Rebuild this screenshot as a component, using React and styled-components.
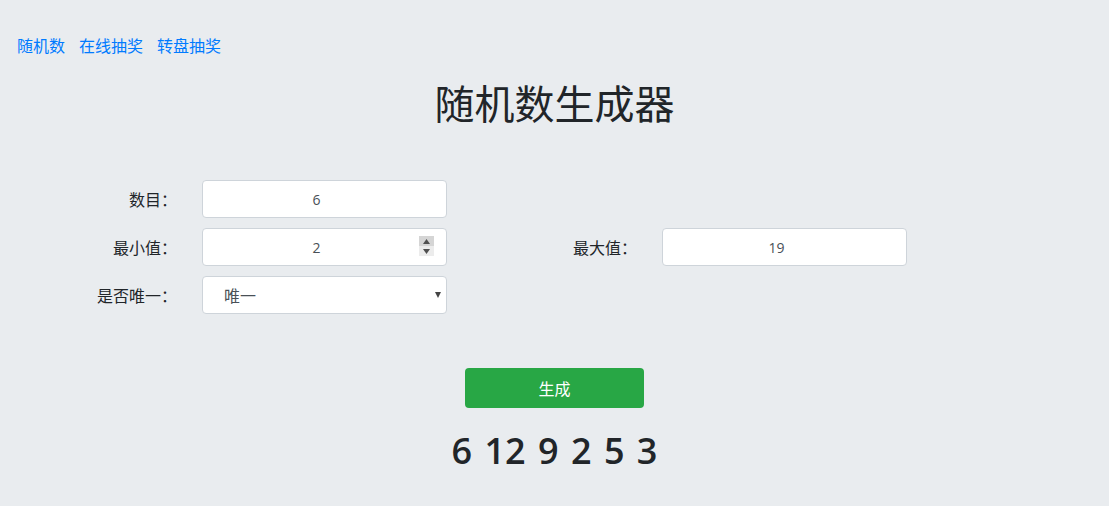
import React from 'react';
import styled, { createGlobalStyle } from 'styled-components';

const GlobalStyle = createGlobalStyle`
  html, body {
    margin: 0;
    padding: 0;
    background: #e9ecef;
  }
  body {
    font-family: "Open Sans", "Noto Sans CJK SC", sans-serif;
    color: #212529;
  }
`;

const Page = styled.div`
  min-height: 506px;
  padding-top: 34px;
  box-sizing: border-box;
`;

const Nav = styled.nav`
  display: flex;
  gap: 14px;
  padding-left: 17px;
  height: 24px;
  align-items: center;
`;

const NavLink = styled.a`
  color: #007bff;
  font-size: 16px;
  line-height: 24px;
  text-decoration: none;
`;

const Title = styled.h1`
  margin: 22px 0 0;
  text-align: center;
  font-size: 40px;
  line-height: 48px;
  font-weight: 400;
`;

const Form = styled.div`
  display: grid;
  grid-template-columns: 186px 275px 185px 275px;
  row-gap: 10px;
  margin-top: 52px;
`;

const Label = styled.label`
  grid-column: ${p => p.col};
  display: flex;
  align-items: center;
  justify-content: flex-end;
  padding-right: 9px;
  font-size: 16px;
`;

const Field = styled.div`
  grid-column: ${p => p.col};
  position: relative;
  padding: 0 14px 0 16px;
`;

const Input = styled.input`
  display: block;
  width: 100%;
  box-sizing: border-box;
  height: 38px;
  padding: 0 16px 0 0;
  border: 1px solid #ced4da;
  border-radius: 4px;
  background: #fff;
  text-align: center;
  font-family: "Open Sans", "Noto Sans CJK SC", sans-serif;
  font-size: 14px;
  color: #495057;
  outline: none;
`;

const Spinner = styled.div`
  position: absolute;
  top: 8px;
  right: 27px;
  width: 15px;
  height: 20px;
  display: flex;
  flex-direction: column;
`;

const SpinHalf = styled.div`
  flex: 1;
  display: flex;
  align-items: center;
  justify-content: center;
  background: ${p => (p.up ? '#d5d5d5' : '#ececec')};
`;

const Select = styled.div`
  position: relative;
  height: 38px;
  box-sizing: border-box;
  border: 1px solid #ced4da;
  border-radius: 4px;
  background: #fff;
  display: flex;
  align-items: center;
  padding-left: 21px;
  font-size: 16px;
  color: #495057;
`;

const Caret = styled.span`
  position: absolute;
  right: 5px;
  top: 50%;
  transform: translateY(-50%);
  width: 0;
  height: 0;
  border-left: 3.5px solid transparent;
  border-right: 3.5px solid transparent;
  border-top: 6px solid #444;
`;

const Actions = styled.div`
  display: flex;
  justify-content: center;
  margin-top: 54px;
`;

const Button = styled.button`
  width: 179px;
  height: 40px;
  border: none;
  border-radius: 4px;
  background: #28a745;
  color: #fff;
  font-family: "Open Sans", "Noto Sans CJK SC", sans-serif;
  font-size: 16px;
`;

const Result = styled.div`
  margin-top: 21px;
  text-align: center;
  font-size: 36px;
  line-height: 44px;
  font-weight: 600;
  word-spacing: 3px;
  color: #212529;
`;

const Arrow = ({ up }) => (
  <svg width="7" height="5" viewBox="0 0 7 5">
    <path d={up ? 'M0 5 L3.5 0 L7 5 Z' : 'M0 0 L3.5 5 L7 0 Z'} fill="#505050" />
  </svg>
);

export default function App() {
  return (
    <Page>
      <GlobalStyle />
      <Nav>
        <NavLink href="#">随机数</NavLink>
        <NavLink href="#">在线抽奖</NavLink>
        <NavLink href="#">转盘抽奖</NavLink>
      </Nav>
      <Title>随机数生成器</Title>
      <Form>
        <Label col={1}>数目：</Label>
        <Field col={2}>
          <Input defaultValue="6" />
        </Field>

        <Label col={1}>最小值：</Label>
        <Field col={2}>
          <Input defaultValue="2" />
          <Spinner>
            <SpinHalf up><Arrow up /></SpinHalf>
            <SpinHalf><Arrow /></SpinHalf>
          </Spinner>
        </Field>
        <Label col={3}>最大值：</Label>
        <Field col={4}>
          <Input defaultValue="19" />
        </Field>

        <Label col={1}>是否唯一：</Label>
        <Field col={2}>
          <Select>
            唯一
            <Caret />
          </Select>
        </Field>
      </Form>
      <Actions>
        <Button>生成</Button>
      </Actions>
      <Result>6 12 9 2 5 3</Result>
    </Page>
  );
}
